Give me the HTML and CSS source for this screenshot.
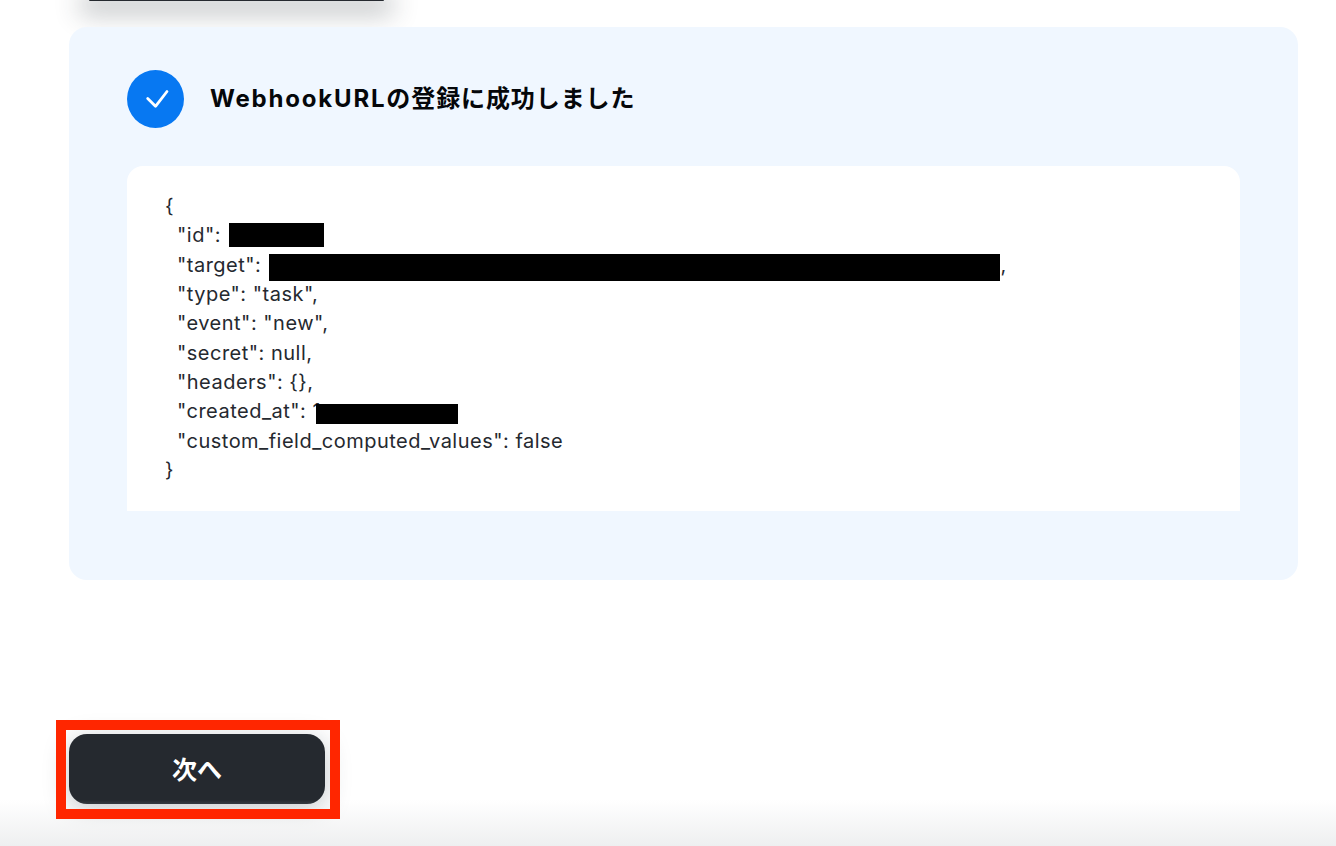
FILE: index.html
```html
<!DOCTYPE html>
<html lang="ja">
<head>
<meta charset="utf-8">
<title>Webhook</title>
<link rel="stylesheet" href="styles.css">
</head>
<body>
<main class="page">
  <div class="top-stub"></div>
  <section class="panel">
    <header class="status">
      <span class="status-icon">
        <svg class="check" width="28" height="28" viewBox="0 0 28 28" fill="none" stroke="#fff" stroke-width="2.8" stroke-linecap="round" stroke-linejoin="round"><path d="M5.7 13.5 L13.5 21.3 L25 6.5"/></svg>
      </span>
      <h1 class="status-title"><span class="title-latin">WebhookURL</span><span class="title-cjk">の登録に成功しました</span></h1>
    </header>
    <div class="code-box">
      <div class="code-line">{</div>
      <div class="code-line in">"id": <span class="redact redact-id"></span></div>
      <div class="code-line in">"target": <span class="redact redact-target"></span>,</div>
      <div class="code-line in">"type": "task",</div>
      <div class="code-line in">"event": "new",</div>
      <div class="code-line in">"secret": null,</div>
      <div class="code-line in">"headers": {},</div>
      <div class="code-line in">"created_at": 1<span class="redact redact-created"></span></div>
      <div class="code-line in">"custom_field_computed_values": false</div>
      <div class="code-line">}</div>
    </div>
  </section>
  <div class="action">
    <button class="next" type="button">次へ</button>
    <div class="highlight"></div>
  </div>
</main>
<div class="bottom-fade"></div>
</body>
</html>
```
FILE: styles.css
```css
html, body {
  margin: 0;
  height: 846px;
  overflow: hidden;
  background: #fff;
}
body {
  position: relative;
  font-family: Inter, "Noto Sans CJK JP", sans-serif;
  color: #000;
}
.page {
  display: flex;
  flex-direction: column;
  padding-left: 69px;
  width: 1229px;
}
.top-stub {
  width: 295px;
  height: 1px;
  margin-left: 20px;
  background: #25292f;
  border-radius: 0 0 10px 10px;
  box-shadow: 0 4px 26px 9px rgba(40, 50, 55, .3);
}
.panel {
  margin-top: 26px;
  height: 553px;
  box-sizing: border-box;
  padding: 43px 58px 0;
  background: #f0f7ff;
  border-radius: 18px;
}
.status {
  display: flex;
  align-items: center;
  gap: 27px;
}
.status-icon {
  width: 57px;
  height: 58px;
  border-radius: 50%;
  background: #0778f2;
  display: flex;
  align-items: center;
  justify-content: center;
}
.status-title {
  margin: 0 0 0 -1px;
  font-size: 24px;
  line-height: 58px;
  height: 58px;
  font-weight: 700;
  color: #05070a;
}
.title-latin {
  letter-spacing: 1.8px;
}
.title-cjk {
  letter-spacing: .9px;
}
.code-box {
  margin-top: 38px;
  height: 345px;
  box-sizing: border-box;
  padding: 26px 38px 0;
  background: #fff;
  border-radius: 16px 16px 0 0;
}
.code-line {
  height: 29.35px;
  line-height: 29.35px;
  font-size: 20px;
  letter-spacing: .49px;
  color: #25292f;
  white-space: nowrap;
}
.code-line.in {
  padding-left: 12px;
}
.redact {
  display: inline-block;
  background: #000;
  vertical-align: middle;
}
.redact-id {
  width: 95px;
  height: 24px;
  margin-left: 2px;
  transform: translateY(-2px);
}
.redact-target {
  width: 731px;
  height: 27px;
  margin-left: 2px;
  transform: translateY(1px);
}
.redact-created {
  width: 142px;
  height: 20px;
  margin-left: -5px;
  transform: translateY(1px);
}
.action {
  position: relative;
  margin-top: 154px;
  width: 256px;
}
.next {
  display: block;
  width: 256px;
  height: 70px;
  padding: 0 0 2px;
  border: 0;
  border-radius: 18px;
  background: #25292f;
  color: #fff;
  font-family: Inter, "Noto Sans CJK JP", sans-serif;
  font-size: 25px;
  font-weight: 700;
  box-shadow: 0 6px 26px rgba(40, 50, 60, .28);
}
.highlight {
  position: absolute;
  z-index: 2;
  left: -13px;
  top: -14px;
  width: 284px;
  height: 99px;
  box-sizing: border-box;
  border: 10px solid #ff2600;
}
.bottom-fade {
  position: absolute;
  left: 0;
  right: 0;
  bottom: 0;
  height: 46px;
  background: linear-gradient(to bottom, rgba(238, 239, 240, 0), #eeeff0);
  pointer-events: none;
}
```
